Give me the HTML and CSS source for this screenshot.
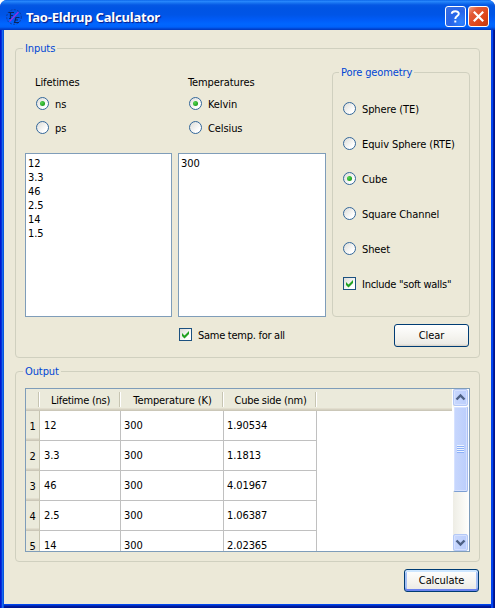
FILE: index.html
```html
<!DOCTYPE html>
<html lang="en">
<head>
<meta charset="utf-8">
<title>Tao-Eldrup Calculator</title>
<link rel="stylesheet" href="styles.css">
</head>
<body>
<div class="window">
  <header class="titlebar">
    <svg class="app-icon" width="16" height="16" viewBox="0 0 16 16">
      <circle cx="8" cy="8" r="7.3" fill="none" stroke="#0d3a9c" stroke-width="1" stroke-dasharray="2 1.4"/>
      <path d="M2.500 3.500H8M4.500 3.500V9M3 9.500H5M4 6.500H7M13.500 8.500H10L8.500 13.500H13M9.500 11H12" fill="none" stroke="#0a245f" stroke-width="1.200"/>
      <path d="M3.500 12.500L12.500 3" stroke="#a02be0" stroke-width="1.100"/>
    </svg>
    <h1>Tao-Eldrup Calculator</h1>
    <button class="cap help" aria-label="Help"><svg width="19" height="19" viewBox="0 0 19 19"><path d="M5.800 6.800C5.800 3.500 12.800 3.200 12.800 6.800C12.800 9 9.300 9.200 9.300 12" fill="none" stroke="#fff" stroke-width="2"/><path d="M8.300 13.500h2v2h-2z" fill="#fff"/></svg></button>
    <button class="cap close" aria-label="Close"><svg width="19" height="19" viewBox="0 0 19 19"><path d="M4.800 4.800L14.200 14.200M14.200 4.800L4.800 14.200" stroke="#fff" stroke-width="2.200"/></svg></button>
  </header>
  <main class="client">
    <section class="group inputs">
      <h2 class="legend">Inputs</h2>
      <div class="columns">
        <div class="col">
          <div class="units">
            <p class="caption">Lifetimes</p>
            <label class="opt"><i class="radio on"></i><span>ns</span></label>
            <label class="opt"><i class="radio"></i><span>ps</span></label>
          </div>
          <div class="list"><div>12</div><div>3.3</div><div>46</div><div>2.5</div><div>14</div><div>1.5</div></div>
        </div>
        <div class="col">
          <div class="units">
            <p class="caption">Temperatures</p>
            <label class="opt"><i class="radio on"></i><span>Kelvin</span></label>
            <label class="opt"><i class="radio"></i><span>Celsius</span></label>
          </div>
          <div class="list"><div>300</div></div>
        </div>
        <div class="group pore">
          <h2 class="legend">Pore geometry</h2>
          <label class="opt"><i class="radio"></i><span>Sphere (TE)</span></label>
          <label class="opt"><i class="radio"></i><span>Equiv Sphere (RTE)</span></label>
          <label class="opt"><i class="radio on"></i><span>Cube</span></label>
          <label class="opt"><i class="radio"></i><span>Square Channel</span></label>
          <label class="opt"><i class="radio"></i><span>Sheet</span></label>
          <label class="opt tight"><i class="check"><svg width="11" height="11" viewBox="0 0 11 11"><path d="M2 4v3l2.500 2.500L9 5V2L4.500 6.500z" fill="#21a121"/></svg></i><span>Include "soft walls"</span></label>
        </div>
      </div>
      <div class="actions">
        <label class="opt tight"><i class="check"><svg width="11" height="11" viewBox="0 0 11 11"><path d="M2 4v3l2.500 2.500L9 5V2L4.500 6.500z" fill="#21a121"/></svg></i><span>Same temp. for all</span></label>
        <button class="btn">Clear</button>
      </div>
    </section>
    <section class="group output">
      <h2 class="legend">Output</h2>
      <div class="view">
        <div class="sheet">
          <div class="row head"><b></b><b class="tight">Lifetime (ns)</b><b>Temperature (K)</b><b class="tight">Cube side (nm)</b></div>
          <div class="row"><b>1</b><span>12</span><span>300</span><span>1.90534</span></div>
          <div class="row"><b>2</b><span>3.3</span><span>300</span><span>1.1813</span></div>
          <div class="row"><b>3</b><span>46</span><span>300</span><span>4.01967</span></div>
          <div class="row"><b>4</b><span>2.5</span><span>300</span><span>1.06387</span></div>
          <div class="row"><b>5</b><span>14</span><span>300</span><span>2.02365</span></div>
        </div>
        <div class="scroll">
          <div class="arrow"><svg width="15" height="15" viewBox="0 0 15 15"><path d="M3.500 9.500L7.500 5.500L11.500 9.500" fill="none" stroke="#4d6185" stroke-width="2.400"/></svg></div>
          <div class="thumb"><i></i><i></i><i></i><i></i></div>
          <div class="arrow down"><svg width="15" height="15" viewBox="0 0 15 15"><path d="M3.500 5.500L7.500 9.500L11.500 5.500" fill="none" stroke="#4d6185" stroke-width="2.400"/></svg></div>
        </div>
      </div>
    </section>
    <div class="foot"><button class="btn default">Calculate</button></div>
  </main>
</div>
</body>
</html>
```

FILE: styles.css
```css
* { box-sizing: border-box; }
html { background: #fff; }
body {
  margin: 0;
  font: 11px/14px Tahoma, "DejaVu Sans Condensed", "DejaVu Sans", sans-serif;
  font-stretch: condensed;
  color: #000;
  letter-spacing: -0.1px;
}
h1, h2, p { margin: 0; }
button { font: inherit; letter-spacing: inherit; color: inherit; padding: 0; }
svg { display: block; }
.tight { letter-spacing: -0.27px; }

.window {
  width: 495px;
  height: 608px;
  display: flex;
  flex-direction: column;
  border-radius: 7px 7px 0 0;
  overflow: hidden;
  background: linear-gradient(90deg, #0019cf 0 1px, #0831d9 1px 2px, #166aee 2px 3px, #0855dd 3px 4px, transparent 4px 491px, #0144f0 491px 493px, #001da0 493px 494px, #00138c 494px),
              linear-gradient(#0048f1 0 604px, #0040e6 605px, #001da0 606px, #00138c 608px);
}
.titlebar {
  height: 30px;
  flex: none;
  display: flex;
  align-items: center;
  padding: 3px 6px 0;
  background: linear-gradient(#0058e0 0, #2b8bff 1px, #1672f0 3px, #0558e4 5px, #0054e3 8px, #0055e7 15px, #005cf8 20px, #0066ff 24px, #0062fb 27px, #0043cf 29px, #0037bd 30px);
}
.titlebar h1 {
  flex: 1;
  margin-left: 4px;
  font: bold 13px/18px "Trebuchet MS", "Noto Sans", sans-serif;
  letter-spacing: -0.2px;
  color: #fff;
  text-shadow: 1px 1px 1px #0a1883;
}
.cap {
  width: 21px;
  height: 21px;
  border: 1px solid #fff;
  border-radius: 3px;
  margin-left: 2px;
}
.help { background: radial-gradient(circle at 80% 80%, #2f83ff, #2764e8 50%, #3c6fe0 100%); }
.close { background: linear-gradient(135deg, #f0a58c 0, #e35b38 25%, #dd4417 70%, #c03a10 100%); }

.client {
  flex: none;
  width: 487px;
  height: 574px;
  margin-left: 4px;
  padding: 18px 11px 0;
  background: #ece9d8;
}
.group {
  border: 1px solid #d0d0bf;
  border-radius: 4px;
}
.legend {
  width: max-content;
  height: 14px;
  margin: -8px 0 0 -2px;
  padding: 0 2px;
  font: inherit;
  line-height: 16px;
  color: #0046d5;
  background: #ece9d8;
}
.inputs { height: 310px; padding: 0 9px; }
.columns {
  display: grid;
  grid-template-columns: 147px 148px 138px;
  gap: 6px;
  margin-top: 17px;
  height: 245px;
}
.units { height: 81px; padding: 4px 0 0 10px; }
.caption { margin-bottom: 2px; }
.opt { display: flex; align-items: center; gap: 6px; white-space: nowrap; }
.opt span { padding-top: 3px; }
.units .opt { height: 23px; margin-bottom: 1px; padding-left: 1px; }
.list {
  height: 164px;
  border: 1px solid #7f9db9;
  background: #fff;
  padding: 3px 2px;
}
.radio {
  width: 13px;
  height: 13px;
  border: 1px solid #33679a;
  border-radius: 50%;
  background: linear-gradient(135deg, #dcdcd7, #fff 75%);
  display: grid;
  place-items: center;
  flex: none;
}
.radio.on::after {
  content: "";
  width: 5px;
  height: 5px;
  border-radius: 50%;
  background: radial-gradient(circle at 35% 35%, #55d551, #21a121 70%);
}
.check {
  width: 13px;
  height: 13px;
  border: 1px solid #1c5180;
  background: linear-gradient(135deg, #dcdcd7, #fff 75%);
  flex: none;
}
.pore { height: 245px; padding: 0 10px; }
.pore .legend { margin: -8px 0 12px -4px; }
.pore .opt { height: 35px; }
.actions {
  display: flex;
  justify-content: space-between;
  padding: 7px 1px 0 154px;
}
.actions .opt { height: 21px; }
.btn {
  width: 75px;
  height: 23px;
  border: 1px solid #003c74;
  border-radius: 3px;
  background: linear-gradient(#fff, #f4f3ee 60%, #ecebe6 90%, #d6d0c5);
}
.actions .btn { padding-top: 1px; }
.default {
  padding-top: 1px;
  box-shadow: inset 0 2px #cee7ff, inset 0 -2px #6982ee, inset 2px 0 #a5c0f5, inset -2px 0 #a5c0f5;
}

.output { height: 191px; margin-top: 13px; padding: 0 9px; }
.view {
  display: flex;
  width: 445px;
  height: 164px;
  margin-top: 10px;
  border: 1px solid #7f9db9;
  background: #fff;
  overflow: hidden;
}
.sheet { flex: 1; }
.row { display: grid; grid-template-columns: 14px 81px 103px 93px; height: 30px; }
.row > * { font-weight: normal; }
.row span {
  border-right: 1px solid #c0c0c0;
  border-bottom: 1px solid #c0c0c0;
  padding: 8px 0 0 3px;
}
.row span:nth-child(2) { padding-left: 4px; }
.row > b:first-child {
  text-align: center;
  padding-top: 9px;
  background: #ebeadb;
  border-right: 1px solid #c7c5b2;
  box-shadow: inset 0 -1px #cbc7b8, inset 0 -2px #d6d2c2, inset 0 -3px #e2dece;
}
.head {
  height: 22px;
  background: linear-gradient(#ebeadb 19px, #e2dece 19px 20px, #d6d2c2 20px 21px, #cbc7b8 21px);
}
.row.head b {
  padding: 5px 0 0;
  text-align: center;
  border: 0;
  box-shadow: none;
  background: linear-gradient(90deg, #c7c5b2 0 1px, #fff 1px) right 3px / 2px 15px no-repeat;
}
.scroll {
  width: 17px;
  display: flex;
  flex-direction: column;
  background: linear-gradient(90deg, #eeede5, #fefefb);
  border: solid #fff;
  border-width: 0 1px;
}
.arrow, .thumb {
  border: 1px solid #b4c8f6;
  border-radius: 2px;
  background: linear-gradient(90deg, #c8d7fd, #bbcefc);
  box-shadow: inset 0 0 0 1px #d5e1ff;
}
.arrow { height: 17px; }
.arrow svg { margin-left: -1px; }
.down { margin-top: auto; }
.thumb {
  height: 86px;
  display: flex;
  flex-direction: column;
  align-items: center;
  justify-content: center;
  border-color: #fff #a8bef2 #7c9fd3 #fff;
}
.thumb i { width: 7px; height: 2px; background: linear-gradient(#eef4fe 50%, #8cb0f8 50%); }
.foot { display: flex; justify-content: flex-end; padding: 7px 1px 0 0; }
```
